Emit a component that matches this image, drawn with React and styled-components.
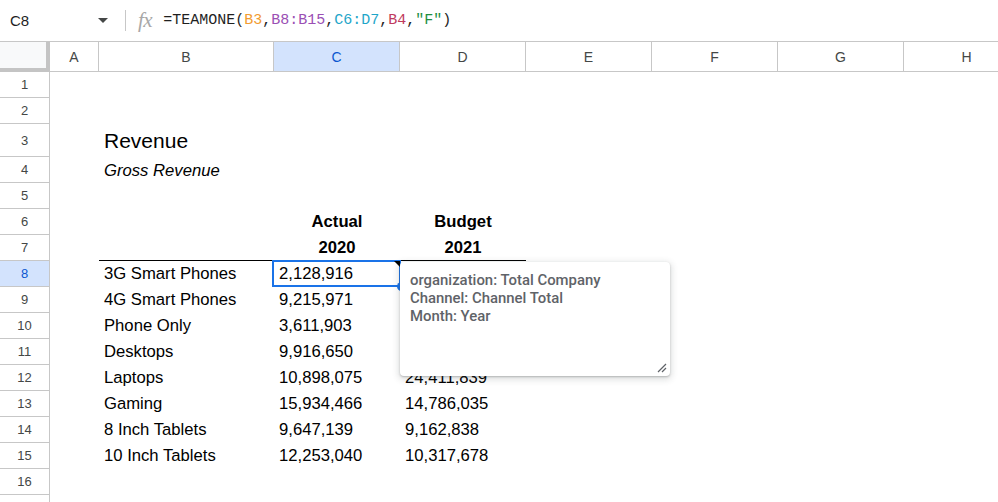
import React from "react";
import styled, { createGlobalStyle } from "styled-components";

const GlobalStyle = createGlobalStyle`
  body { margin: 0; background: #fff; font-family: "Liberation Sans", Arial, sans-serif; overflow: hidden; }
  * { box-sizing: border-box; }
`;

const Page = styled.div`width: 998px; height: 502px; overflow: hidden; background: #fff;`;

const FormulaBar = styled.div`
  display: flex; align-items: center; height: 42px; border-bottom: 1px solid #c7c7c7; background: #fff;
`;
const NameBox = styled.div`
  display: flex; align-items: center; justify-content: space-between; width: 112px; padding: 0 4px 0 10px;
  font-size: 15px; color: #1f1f1f;
`;
const Caret = styled.span`
  width: 0; height: 0; border-left: 5px solid transparent; border-right: 5px solid transparent; border-top: 5px solid #444746;
`;
const Divider = styled.div`width: 1px; height: 21px; background: #c7c7c7; margin: 0 12px 0 13px;`;
const Fx = styled.span`
  font-family: "Liberation Serif", "DejaVu Serif", serif; font-style: italic; font-size: 21px; color: #a8a8a8; margin-right: 11px; letter-spacing: -0.5px;
`;
const Formula = styled.div`
  font-family: "Liberation Mono", "DejaVu Sans Mono", monospace; font-size: 15px; color: #1f1f1f; white-space: pre;
`;
const Ref = styled.span`color: ${p => p.$c};`;

const Sheet = styled.div`position: relative;`;
const Row = styled.div`display: flex; height: ${p => p.$h || 26}px;`;

const Corner = styled.div`
  width: 50px; flex: none; background: #f8f9fa; border-right: 4px solid #c4c4c4; border-bottom: 4px solid #c4c4c4;
`;
const ColHead = styled.div`
  width: ${p => p.$w}px; flex: none; display: flex; align-items: center; justify-content: center;
  border-right: 1px solid #c7c7c7; border-bottom: 1px solid #c7c7c7;
  background: ${p => (p.$active ? "#d3e3fd" : "#fff")}; color: ${p => (p.$active ? "#0b57d0" : "#444746")};
  font-size: 14px;
`;
const RowHead = styled.div`
  width: 50px; flex: none; display: flex; align-items: center; justify-content: center;
  border-right: 1px solid #c7c7c7; border-bottom: 1px solid #c7c7c7;
  background: ${p => (p.$active ? "#d3e3fd" : "#fff")}; color: ${p => (p.$active ? "#0b57d0" : "#444746")};
  font-size: 13px;
`;
const Cell = styled.div`
  position: relative; width: ${p => p.$w}px; flex: none; display: flex; align-items: flex-end;
  justify-content: ${p => p.$align || "flex-start"}; padding: 0 5px ${p => p.$pb || 3}px; white-space: nowrap;
  font-size: ${p => p.$size || 16.67}px; font-weight: ${p => (p.$bold ? 700 : 400)};
  font-style: ${p => (p.$italic ? "italic" : "normal")}; color: #000; line-height: 19px;
  border-bottom: 1px solid ${p => (p.$line ? "#000" : "transparent")};
`;
const Selection = styled.div`
  position: absolute; top: -1px; left: -2px; right: -1px; bottom: -1px; border: 2px solid #1a73e8; pointer-events: none; z-index: 2;
`;
const NoteMark = styled.span`
  position: absolute; top: 0; right: 0; width: 0; height: 0; border-left: 6px solid transparent; border-top: 6px solid #000; z-index: 3;
`;
const Handle = styled.span`
  position: absolute; right: -6px; bottom: -5px; width: 9px; height: 9px; border-radius: 50%; background: #1a73e8; z-index: 3;
`;

const Note = styled.div`
  position: absolute; left: 400px; top: 220px; width: 270px; height: 114px; background: #fff; border-radius: 4px; z-index: 5;
  box-shadow: 0 1px 2px rgba(60,64,67,.3), 0 2px 6px 2px rgba(60,64,67,.15);
  padding: 9px 10px; font-family: Roboto, "Noto Sans", sans-serif; font-weight: 500; font-size: 14.9px; line-height: 18px; color: #5f6368;
`;
const Grip = styled.svg`position: absolute; right: 3px; bottom: 3px;`;

const cols = [
  { k: "A", w: 49 }, { k: "B", w: 175 }, { k: "C", w: 126 }, { k: "D", w: 126 },
  { k: "E", w: 126 }, { k: "F", w: 126 }, { k: "G", w: 126 }, { k: "H", w: 126 },
];

// D8:D11 sit under the note, so they are left blank
const data = [
  ["3G Smart Phones", "2,128,916", ""],
  ["4G Smart Phones", "9,215,971", ""],
  ["Phone Only", "3,611,903", ""],
  ["Desktops", "9,916,650", ""],
  ["Laptops", "10,898,075", "24,411,839"],
  ["Gaming", "15,934,466", "14,786,035"],
  ["8 Inch Tablets", "9,647,139", "9,162,838"],
  ["10 Inch Tablets", "12,253,040", "10,317,678"],
];

const rowCells = n => {
  if (n === 3) return { B: { t: "Revenue", size: 21, pb: 6 } };
  if (n === 4) return { B: { t: "Gross Revenue", italic: true, pb: 2 } };
  if (n === 6) return { C: { t: "Actual", bold: true, align: "center" }, D: { t: "Budget", bold: true, align: "center" } };
  if (n === 7) return {
    B: { t: "", line: true },
    C: { t: "2020", bold: true, align: "center", line: true },
    D: { t: "2021", bold: true, align: "center", line: true },
  };
  if (n >= 8 && n <= 15) {
    const d = data[n - 8];
    return { B: { t: d[0] }, C: { t: d[1], sel: n === 8 }, D: { t: d[2] } };
  }
  return {};
};

export default function App() {
  const rows = Array.from({ length: 17 }, (_, i) => i + 1);
  return (
    <Page>
      <GlobalStyle />
      <FormulaBar>
        <NameBox>C8<Caret /></NameBox>
        <Divider />
        <Fx>fx</Fx>
        <Formula>
          =TEAMONE(<Ref $c="#f29b2f">B3</Ref>,<Ref $c="#9a4fb4">B8:B15</Ref>,<Ref $c="#1ea6c9">C6:D7</Ref>,<Ref $c="#c03a5e">B4</Ref>,<Ref $c="#1e8e3e">"F"</Ref>)
        </Formula>
      </FormulaBar>
      <Sheet>
        <Row $h={30}>
          <Corner />
          {cols.map(c => <ColHead key={c.k} $w={c.w} $active={c.k === "C"}>{c.k}</ColHead>)}
        </Row>
        {rows.map(n => {
          const cells = rowCells(n);
          return (
            <Row key={n} $h={n === 3 ? 33 : 26}>
              <RowHead $active={n === 8}>{n}</RowHead>
              {cols.map(c => {
                const v = cells[c.k];
                return (
                  <Cell key={c.k} $w={c.w} $size={v && v.size} $bold={v && v.bold} $italic={v && v.italic}
                    $align={v && v.align} $line={v && v.line} $pb={v && v.pb}>
                    {v && v.t}
                    {v && v.sel && <><Selection /><NoteMark /><Handle /></>}
                  </Cell>
                );
              })}
            </Row>
          );
        })}
        <Note>
          organization: Total Company<br />Channel: Channel Total<br />Month: Year
          <Grip width="10" height="10" viewBox="0 0 10 10">
            <path d="M1 9 L9 1 M5 9 L9 5" stroke="#5f6368" strokeWidth="1.2" fill="none" />
          </Grip>
        </Note>
      </Sheet>
    </Page>
  );
}
